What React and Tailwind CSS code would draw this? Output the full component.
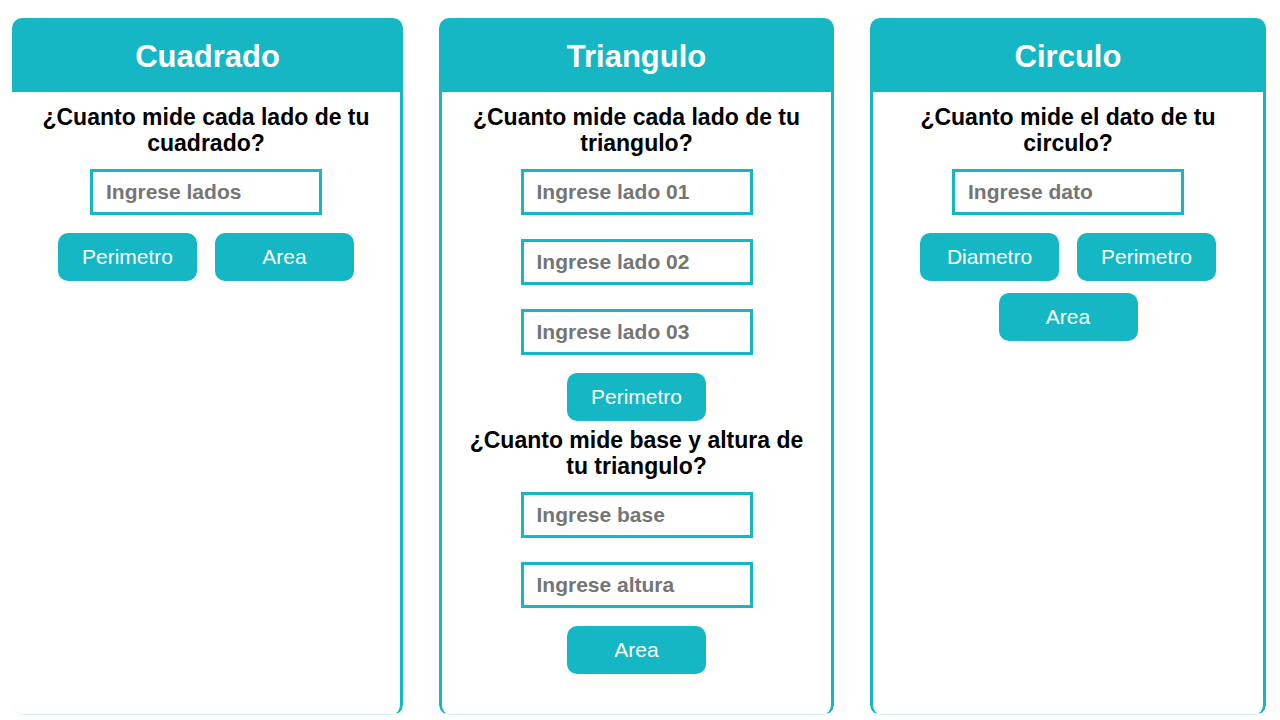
const Field = ({ placeholder, className = "" }) => (
  <input
    type="text"
    placeholder={placeholder}
    className={`w-[232px] h-[46px] border-[3px] border-[#14b7c3] px-[13px] text-[21px] font-bold text-gray-700 placeholder-[#757575] outline-none ${className}`}
  />
);

const Btn = ({ children, className = "" }) => (
  <button className={`w-[139px] h-[48px] rounded-[10px] bg-[#14b7c3] text-white text-[21px] ${className}`}>
    {children}
  </button>
);

const Question = ({ children, className = "" }) => (
  <h2 className={`text-[23px] leading-[26px] font-bold text-black text-center ${className}`}>
    {children}
  </h2>
);

const Card = ({ title, width, noLeft, children }) => (
  <div className={`${width} h-[697px] flex flex-col rounded-[10px] overflow-hidden`}>
    <div className="h-[74px] shrink-0 bg-[#14b7c3] flex items-center justify-center pt-[4px]">
      <h1 className="text-white text-[31px] font-bold">{title}</h1>
    </div>
    <div
      className={`flex-1 flex flex-col items-center border-r-[3px] border-b border-r-[#14b7c3] border-b-[#d3eff1] rounded-b-[10px] pt-[12px] ${
        noLeft ? "border-l-0" : "border-l-[3px] border-l-[#14b7c3]"
      }`}
    >
      {children}
    </div>
  </div>
);

export default function App() {
  return (
    <div className="w-[1280px] h-[720px] bg-white flex gap-[36px] pl-[12px] pt-[18px] overflow-hidden font-['Liberation_Sans',Arial,sans-serif]">
      <Card title="Cuadrado" width="w-[391px]" noLeft>
        <Question className="px-[30px]">¿Cuanto mide cada lado de tu cuadrado?</Question>
        <Field placeholder="Ingrese lados" className="mt-[13px]" />
        <div className="flex gap-[18px] mt-[18px]">
          <Btn>Perimetro</Btn>
          <Btn>Area</Btn>
        </div>
      </Card>

      <Card title="Triangulo" width="w-[395px]">
        <Question className="px-[26px]">¿Cuanto mide cada lado de tu triangulo?</Question>
        <Field placeholder="Ingrese lado 01" className="mt-[13px]" />
        <Field placeholder="Ingrese lado 02" className="mt-[24px]" />
        <Field placeholder="Ingrese lado 03" className="mt-[24px]" />
        <Btn className="mt-[18px]">Perimetro</Btn>
        <Question className="px-[20px] mt-[6px]">¿Cuanto mide base y altura de tu triangulo?</Question>
        <Field placeholder="Ingrese base" className="mt-[13px]" />
        <Field placeholder="Ingrese altura" className="mt-[24px]" />
        <Btn className="mt-[18px]">Area</Btn>
      </Card>

      <Card title="Circulo" width="w-[396px]">
        <Question className="px-[40px]">¿Cuanto mide el dato de tu circulo?</Question>
        <Field placeholder="Ingrese dato" className="mt-[13px]" />
        <div className="flex gap-[18px] mt-[18px]">
          <Btn>Diametro</Btn>
          <Btn>Perimetro</Btn>
        </div>
        <Btn className="mt-[12px]">Area</Btn>
      </Card>
    </div>
  );
}
